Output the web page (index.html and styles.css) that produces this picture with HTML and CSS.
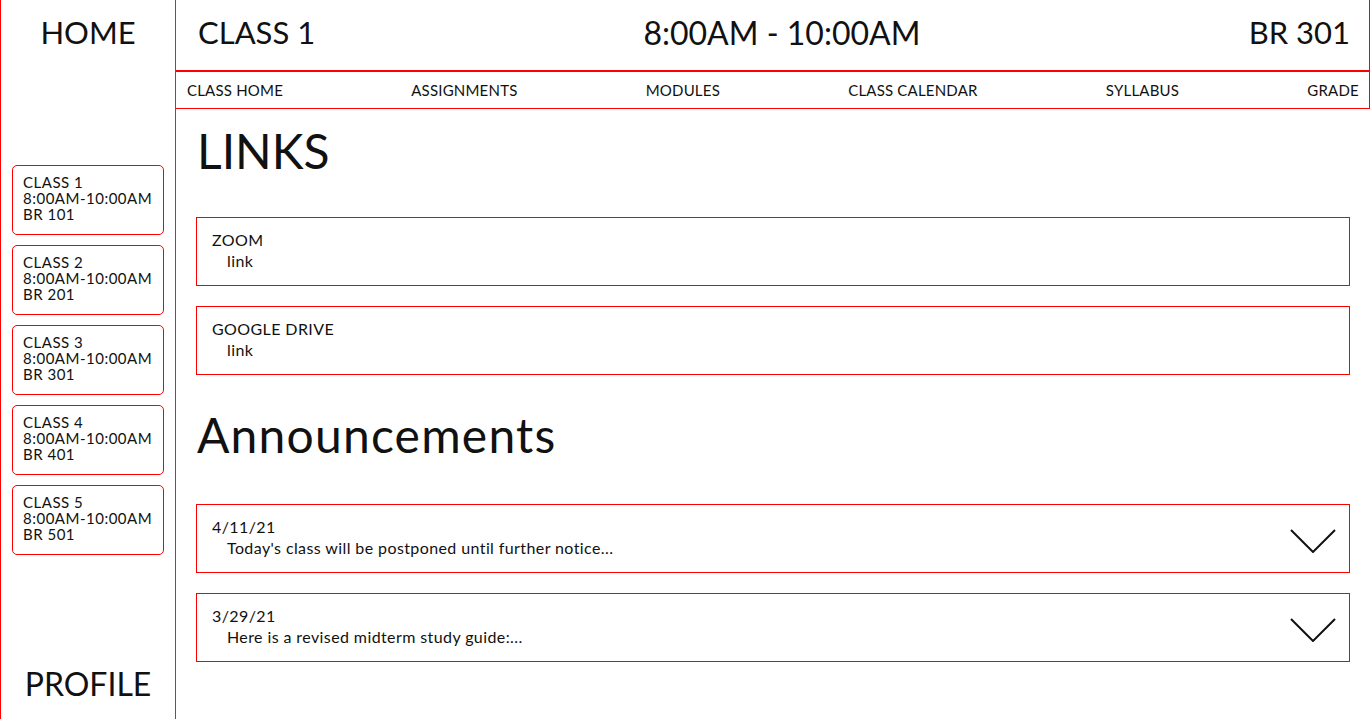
FILE: index.html
```html
<!doctype html>
<html>

<head>
    <meta charset="UTF-8">
    <title>Class 1</title>
    <link rel="stylesheet" href="styles.css">
</head>

<body>
    <div class="page">
        <!-- Sidebar with class list -->
        <nav class="sidebar">
            <div class="side-home">HOME</div>
            <div class="class-list">
                <div class="class-card">CLASS 1<br>8:00AM-10:00AM<br>BR 101</div>
                <div class="class-card">CLASS 2<br>8:00AM-10:00AM<br>BR 201</div>
                <div class="class-card">CLASS 3<br>8:00AM-10:00AM<br>BR 301</div>
                <div class="class-card">CLASS 4<br>8:00AM-10:00AM<br>BR 401</div>
                <div class="class-card">CLASS 5<br>8:00AM-10:00AM<br>BR 501</div>
            </div>
            <div class="side-profile">PROFILE</div>
        </nav>

        <main class="main">
            <header class="class-head">
                <div class="class-name">CLASS 1</div>
                <div class="class-time">8:00AM - 10:00AM</div>
                <div class="class-room">BR 301</div>
            </header>
            <div class="class-nav">
                <span>CLASS HOME</span>
                <span>ASSIGNMENTS</span>
                <span>MODULES</span>
                <span>CLASS CALENDAR</span>
                <span>SYLLABUS</span>
                <span>GRADE</span>
            </div>

            <section class="content">
                <h1 class="links-title">LINKS</h1>
                <div class="box">
                    <div class="box-title">ZOOM</div>
                    <div class="box-text">link</div>
                </div>
                <div class="box">
                    <div class="box-title">GOOGLE DRIVE</div>
                    <div class="box-text">link</div>
                </div>

                <h1 class="ann-title">Announcements</h1>
                <div class="box ann">
                    <div>
                        <div class="box-title">4/11/21</div>
                        <div class="box-text">Today's class will be postponed until further notice...</div>
                    </div>
                    <svg class="chevron" width="46" height="24" viewBox="0 0 46 24">
                        <polyline points="1,1 23,23 45,1" fill="none" stroke="#111" stroke-width="2" />
                    </svg>
                </div>
                <div class="box ann">
                    <div>
                        <div class="box-title">3/29/21</div>
                        <div class="box-text">Here is a revised midterm study guide:...</div>
                    </div>
                    <svg class="chevron" width="46" height="24" viewBox="0 0 46 24">
                        <polyline points="1,1 23,23 45,1" fill="none" stroke="#111" stroke-width="2" />
                    </svg>
                </div>
            </section>
        </main>
    </div>
</body>

</html>
```

FILE: styles.css
```css
/* Layout */

body {
    margin: 0;
    font-family: Lato, "Noto Sans", sans-serif;
    color: #111;
    background: #fff;
}

.page {
    display: flex;
    height: 719px;
}

.sidebar {
    width: 174px;
    flex-shrink: 0;
    border-left: 1px solid #f00;
    border-right: 1px solid #d22;
    display: flex;
    flex-direction: column;
}

.side-home {
    height: 67px;
    padding-top: 13px;
    text-align: center;
    font-size: 31px;
}

.class-list {
    display: flex;
    flex-direction: column;
    gap: 10px;
    padding: 85px 11px 0 11px;
}

.class-card {
    height: 52px;
    padding: 8px 10px 8px 10px;
    border: 1px solid #f00;
    border-radius: 5px;
    font-size: 15px;
    line-height: 16px;
    letter-spacing: 0.5px;
}

.side-profile {
    margin-top: auto;
    padding-bottom: 16px;
    text-align: center;
    font-size: 32px;
}

.main {
    flex: 1;
    display: flex;
    flex-direction: column;
    min-width: 0;
}

.class-head {
    height: 64px;
    display: flex;
    align-items: center;
    justify-content: space-between;
    padding: 0 19px 6px 22px;
    border-right: 1px solid #f00;
    border-bottom: 2px solid #f00;
    font-size: 31px;
}

.class-time {
    font-size: 32px;
}

.class-nav {
    height: 35px;
    display: flex;
    align-items: center;
    justify-content: space-between;
    padding: 0 10px 1px 11px;
    border-right: 1px solid #f00;
    border-bottom: 1px solid #f00;
    font-size: 15px;
    letter-spacing: 0.2px;
}

.content {
    padding: 0 20px 0 20px;
}

.links-title,
.ann-title {
    margin: 0;
    font-weight: 400;
    font-size: 48px;
    line-height: 60px;
    padding-left: 1px;
}

.links-title {
    margin-top: 12px;
    margin-bottom: 36px;
}

.ann-title {
    margin-top: 30px;
    margin-bottom: 39px;
    letter-spacing: 1.2px;
}

.box {
    height: 47px;
    padding: 11px 15px 9px 15px;
    border: 1px solid #f00;
    margin-bottom: 20px;
    font-size: 16px;
    line-height: 21px;
    letter-spacing: 0.4px;
}

.box-text {
    padding-left: 15px;
}

.ann {
    display: flex;
    justify-content: space-between;
    align-items: flex-start;
}

.chevron {
    margin-right: -2px;
    margin-top: 13px;
}
```
